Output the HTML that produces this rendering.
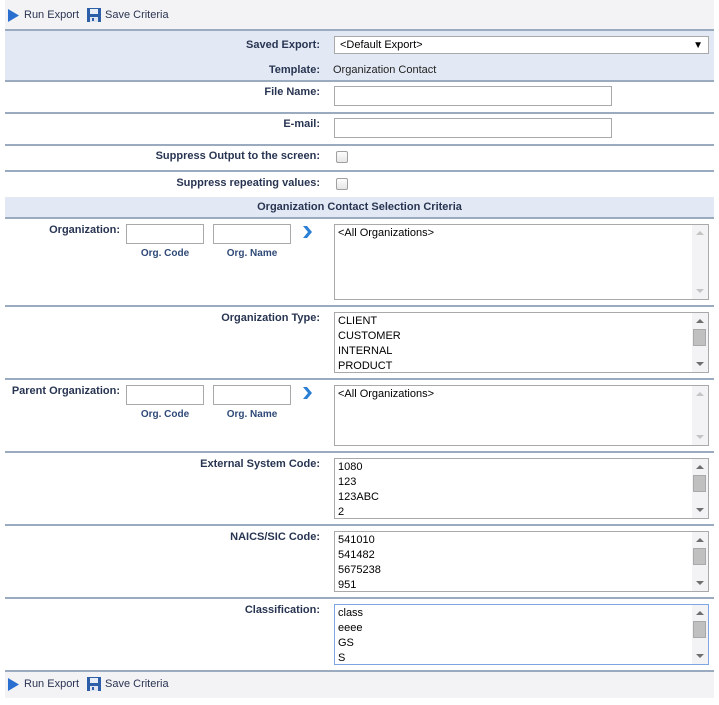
<!DOCTYPE html>
<html><head><meta charset="utf-8"><style>
*{box-sizing:border-box;margin:0;padding:0}
body{width:719px;height:705px;background:#fff;font-family:"Liberation Sans",Arial,sans-serif;font-size:11px;position:relative;overflow:hidden}
.a{position:absolute}
.tb{left:5px;width:709px;background:#f3f2f5}
.line{left:5px;width:709px;height:2px;background:#9aaabf}
.blue{left:5px;width:709px;background:#e3e9f4}
.lbl{font-weight:bold;color:#283552;text-align:right;font-size:11px}
.inp{border:1px solid #a9a9a9;background:#fff}
.sub{font-weight:bold;color:#2f4a78;font-size:10px;text-align:center}
.lb{left:334px;width:375px;border:1px solid #a9a9a9;background:#fff;font-size:11px;color:#000;line-height:15px;padding:1px 3px}
.sb{position:absolute;right:0;top:0;bottom:0;width:16px;background:#f3f2f5}
.sb:before{content:"";position:absolute;left:4px;top:6px;border:4px solid transparent;border-bottom:4px solid #6e6e6e;border-top:0}
.sb:after{content:"";position:absolute;left:4px;bottom:6px;border:4px solid transparent;border-top:4px solid #6e6e6e;border-bottom:0}
.sb.d:before{border-bottom-color:#c4c4c4}.sb.d:after{border-top-color:#c4c4c4}
.th{position:absolute;left:1px;top:16px;width:13px;height:17px;background:#c0c0c0;border:1px solid #a9a9a9}
.cb{width:12px;height:12px;border:1px solid #a0a0a0;border-radius:2px;background:linear-gradient(#fdfdfd,#e6e6e6)}
</style></head><body>
<div class="a tb" style="top:0;height:29px"></div>
<div class="a" style="left:7px;top:8px"><svg width="13" height="15"><path d="M1 1 L12 7.5 L1 14 Z" fill="#2a6fcf"/></svg></div>
<div class="a" style="left:24px;top:9px;color:#2a3552">Run Export</div>
<div class="a" style="left:87px;top:8px"><svg width="14" height="14"><rect x="0" y="0" width="14" height="14" fill="#2d5ea8"/><rect x="3" y="1" width="8" height="5" fill="#e8eef8"/><rect x="3" y="9" width="8" height="5" fill="#dfe6f2"/><rect x="5" y="10" width="2" height="3" fill="#2d5ea8"/></svg></div>
<div class="a" style="left:105px;top:9px;color:#2a3552">Save Criteria</div>
<div class="a line" style="top:29px"></div>
<div class="a blue" style="top:31px;height:49px"></div>
<div class="a lbl" style="right:399px;top:39px">Saved Export:</div>
<div class="a inp" style="left:334px;top:36px;width:375px;height:18px;padding:2px 5px;font-size:11px">&lt;Default Export&gt;<span style="position:absolute;right:5px;top:3px;font-size:10px">▼</span></div>
<div class="a lbl" style="right:399px;top:64px">Template:</div>
<div class="a" style="left:333px;top:64px;color:#222">Organization Contact</div>
<div class="a line" style="top:80px"></div>
<div class="a lbl" style="right:399px;top:86px">File Name:</div>
<div class="a inp" style="left:334px;top:86px;width:278px;height:20px"></div>
<div class="a line" style="top:112px"></div>
<div class="a lbl" style="right:399px;top:118px">E-mail:</div>
<div class="a inp" style="left:334px;top:118px;width:278px;height:20px"></div>
<div class="a line" style="top:144px"></div>
<div class="a lbl" style="right:399px;top:150px">Suppress Output to the screen:</div>
<div class="a cb" style="left:336px;top:151px"></div>
<div class="a line" style="top:170px"></div>
<div class="a lbl" style="right:399px;top:177px">Suppress repeating values:</div>
<div class="a cb" style="left:336px;top:178px"></div>
<div class="a blue" style="top:197px;height:20px"></div>
<div class="a" style="left:5px;width:709px;top:201px;text-align:center;font-weight:bold;color:#283552">Organization Contact Selection Criteria</div>
<div class="a line" style="top:217px"></div>
<div class="a lbl" style="right:599px;top:224px">Organization:</div>
<div class="a inp" style="left:126px;top:224px;width:78px;height:20px"></div>
<div class="a inp" style="left:213px;top:224px;width:78px;height:20px"></div>
<div class="a sub" style="left:126px;width:78px;top:248px">Org. Code</div>
<div class="a sub" style="left:213px;width:78px;top:248px">Org. Name</div>
<div class="a" style="left:302px;top:226px"><svg width="10" height="12"><path d="M1 0 L5 0 L10 6 L5 12 L1 12 L6 6 Z" fill="#2a7fd4"/></svg></div>
<div class="a lb" style="top:224px;height:76px">&lt;All Organizations&gt;<div class="sb d"></div></div>
<div class="a line" style="top:305px"></div>
<div class="a lbl" style="right:399px;top:312px">Organization Type:</div>
<div class="a lb" style="top:312px;height:61px">CLIENT<br>CUSTOMER<br>INTERNAL<br>PRODUCT<div class="sb"><div class="th"></div></div></div>
<div class="a line" style="top:378px"></div>
<div class="a lbl" style="right:599px;top:385px">Parent Organization:</div>
<div class="a inp" style="left:126px;top:385px;width:78px;height:20px"></div>
<div class="a inp" style="left:213px;top:385px;width:78px;height:20px"></div>
<div class="a sub" style="left:126px;width:78px;top:409px">Org. Code</div>
<div class="a sub" style="left:213px;width:78px;top:409px">Org. Name</div>
<div class="a" style="left:302px;top:387px"><svg width="10" height="12"><path d="M1 0 L5 0 L10 6 L5 12 L1 12 L6 6 Z" fill="#2a7fd4"/></svg></div>
<div class="a lb" style="top:385px;height:61px">&lt;All Organizations&gt;<div class="sb d"></div></div>
<div class="a line" style="top:451px"></div>
<div class="a lbl" style="right:399px;top:458px">External System Code:</div>
<div class="a lb" style="top:458px;height:61px">1080<br>123<br>123ABC<br>2<div class="sb"><div class="th"></div></div></div>
<div class="a line" style="top:524px"></div>
<div class="a lbl" style="right:399px;top:531px">NAICS/SIC Code:</div>
<div class="a lb" style="top:531px;height:61px">541010<br>541482<br>5675238<br>951<div class="sb"><div class="th"></div></div></div>
<div class="a line" style="top:597px"></div>
<div class="a lbl" style="right:399px;top:604px">Classification:</div>
<div class="a lb" style="top:604px;height:61px;border-color:#7ea6e0">class<br>eeee<br>GS<br>S<div class="sb"><div class="th"></div></div></div>
<div class="a line" style="top:670px"></div>
<div class="a tb" style="top:672px;height:26px"></div>
<div class="a" style="left:7px;top:677px"><svg width="13" height="15"><path d="M1 1 L12 7.5 L1 14 Z" fill="#2a6fcf"/></svg></div>
<div class="a" style="left:24px;top:678px;color:#2a3552">Run Export</div>
<div class="a" style="left:87px;top:677px"><svg width="14" height="14"><rect x="0" y="0" width="14" height="14" fill="#2d5ea8"/><rect x="3" y="1" width="8" height="5" fill="#e8eef8"/><rect x="3" y="9" width="8" height="5" fill="#dfe6f2"/><rect x="5" y="10" width="2" height="3" fill="#2d5ea8"/></svg></div>
<div class="a" style="left:105px;top:678px;color:#2a3552">Save Criteria</div>
</body></html>
